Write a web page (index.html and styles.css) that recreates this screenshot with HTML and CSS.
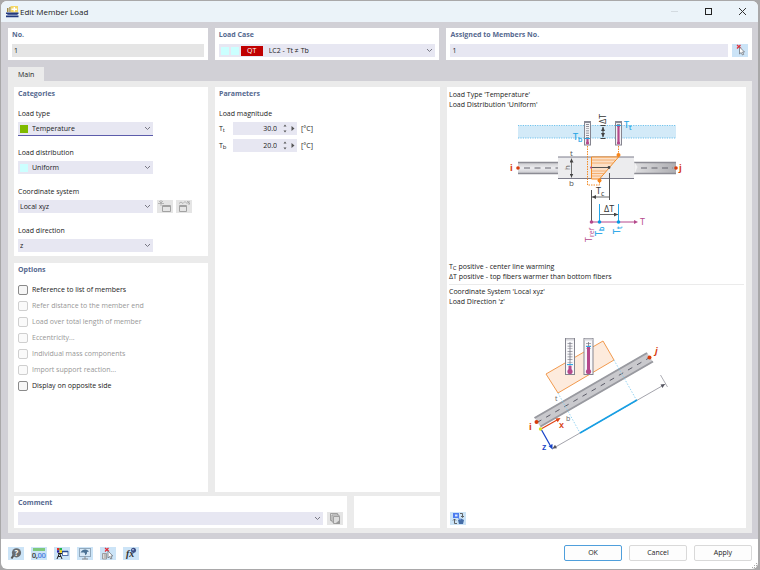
FILE: index.html
```html
<!DOCTYPE html>
<html lang="en">
<head>
<meta charset="utf-8">
<title>Edit Member Load</title>
<link rel="stylesheet" href="styles.css">
</head>
<body>
<svg width="0" height="0" class="defs" aria-hidden="true">
  <defs>
    <symbol id="chev" viewBox="0 0 7 5"><path d="M1 1l2.500 2.500L6 1" fill="none" stroke="#777783" stroke-width="1"/></symbol>
    <symbol id="cursor" viewBox="0 0 16 13"><path d="M5 1l4 3.500M8.500 1L5 4.500" stroke="#e0303c" stroke-width="1.300"/><path d="M7.500 3v7l1.700-1.500 1.300 2.500 1.200-.6-1.200-2.400h2z" fill="#fff" stroke="#70757c" stroke-width=".8"/></symbol>
  </defs>
</svg>
<div class="window">
  <header class="titlebar">
    <svg class="app-icon" width="13" height="12" viewBox="0 0 13 12"><rect x="4.500" y="0" width="7.500" height="6.500" fill="#f3d767"/><path d="M1 2h1.500v4H1zM3.300 1h1.200v5H3.300z" fill="#a08a45"/><path d="M5.500 3.300h5.500M8.300 1v4.500" stroke="#fff" stroke-width="1.400"/><path d="M0 6.500h12.500V8H0zM1.500 7.500h10v1.500h-10zM0 9.500h12.500v1.700H0z" fill="#22397f"/><path d="M1.500 9h10" stroke="#7889b8"/></svg>
    <h1>Edit Member Load</h1>
    <div class="window-buttons">
      <button aria-label="Minimize"><svg width="9" height="9" viewBox="0 0 9 9"><path d="M1 4.500h7" stroke="#d3dae0"/></svg></button>
      <button aria-label="Maximize"><svg width="9" height="9" viewBox="0 0 9 9"><rect x="1.500" y="1.500" width="6" height="6" fill="none" stroke="#222"/></svg></button>
      <button aria-label="Close"><svg width="9" height="9" viewBox="0 0 9 9"><path d="M1 1l7 7M8 1L1 8" stroke="#333"/></svg></button>
    </div>
  </header>

  <main class="content">
    <div class="top-row">
      <section class="card">
        <h2><label for="no">No.</label></h2>
        <input id="no" class="field readonly" value="1" readonly>
      </section>
      <section class="card">
        <h2><label for="case">Load Case</label></h2>
        <div class="combo case">
          <select id="case"><option>LC2 - Tt ≠ Tb</option></select>
          <span class="marks"><i class="swatch cyan"></i><i class="swatch cyan"></i><b class="tag">QT</b></span>
          <svg class="chev" width="7" height="5"><use href="#chev"/></svg>
        </div>
      </section>
      <section class="card">
        <h2><label for="members">Assigned to Members No.</label></h2>
        <div class="inline">
          <input id="members" class="field" value="1">
          <button class="tool" aria-label="Select members"><svg width="16" height="13"><use href="#cursor"/></svg></button>
        </div>
      </section>
    </div>

    <nav class="tabs"><button class="tab">Main</button></nav>

    <div class="panel">
      <div class="left">
        <div class="stack">
          <section class="card categories">
            <h2>Categories</h2>
            <div class="group">
              <label for="type">Load type</label>
              <div class="combo swatched active">
                <select id="type"><option>Temperature</option></select>
                <span class="marks"><i class="swatch green"></i></span>
                <svg class="chev" width="7" height="5"><use href="#chev"/></svg>
              </div>
            </div>
            <div class="group">
              <label for="dist">Load distribution</label>
              <div class="combo swatched">
                <select id="dist"><option>Uniform</option></select>
                <span class="marks"><i class="swatch cyan"></i></span>
                <svg class="chev" width="7" height="5"><use href="#chev"/></svg>
              </div>
            </div>
            <div class="group">
              <label for="system">Coordinate system</label>
              <div class="inline">
                <div class="combo">
                  <select id="system"><option>Local xyz</option></select>
                  <svg class="chev" width="7" height="5"><use href="#chev"/></svg>
                </div>
                <div class="pair">
                  <button class="tool off" aria-label="New coordinate system" disabled><svg width="16" height="13" viewBox="0 0 16 13" fill="none" stroke="#a2a2a2"><path d="M5.500 5.500h8v6h-8zM5.500 6.500h8"/><path d="M2 1l2 2M6 1L4 3M4 0v6M1 3.500h6" stroke-width=".7"/></svg></button>
                  <button class="tool off" aria-label="Edit coordinate system" disabled><svg width="16" height="13" viewBox="0 0 16 13" fill="none" stroke="#a2a2a2"><path d="M3.500 5.500h7v6h-7zM3.500 6.500h7"/><path d="M3 3.500l2-1.500 2 1.500 2-2 2 2 2-2M11 1l3 3M13 1v4" stroke-width=".8"/></svg></button>
                </div>
              </div>
            </div>
            <div class="group">
              <label for="dir">Load direction</label>
              <div class="combo">
                <select id="dir"><option>z</option></select>
                <svg class="chev" width="7" height="5"><use href="#chev"/></svg>
              </div>
            </div>
          </section>
          <section class="card options">
            <h2>Options</h2>
            <label class="check"><input type="checkbox">Reference to list of members</label>
            <label class="check"><input type="checkbox" disabled>Refer distance to the member end</label>
            <label class="check"><input type="checkbox" disabled>Load over total length of member</label>
            <label class="check"><input type="checkbox" disabled>Eccentricity...</label>
            <label class="check"><input type="checkbox" disabled>Individual mass components</label>
            <label class="check"><input type="checkbox" disabled>Import support reaction...</label>
            <label class="check"><input type="checkbox">Display on opposite side</label>
          </section>
        </div>

        <section class="card parameters">
          <h2>Parameters</h2>
          <p class="caption">Load magnitude</p>
          <div class="param">
            <label for="tt">T<span class="sub">t</span></label>
            <div class="spin"><input id="tt" value="30.0"><button aria-label="Change top value"><svg width="14" height="9" viewBox="0 0 14 9" fill="#555"><path d="M1.500 2.500L3 .5l1.500 2zM1.500 6.500L3 8.500l1.500-2zM9.500 2l3 2.500-3 2.500z"/></svg></button></div>
            <span>[°C]</span>
          </div>
          <div class="param">
            <label for="tb">T<span class="sub">b</span></label>
            <div class="spin"><input id="tb" value="20.0"><button aria-label="Change bottom value"><svg width="14" height="9" viewBox="0 0 14 9" fill="#555"><path d="M1.500 2.500L3 .5l1.500 2zM1.500 6.500L3 8.500l1.500-2zM9.500 2l3 2.500-3 2.500z"/></svg></button></div>
            <span>[°C]</span>
          </div>
        </section>

        <div class="bottom-row">
          <section class="card">
            <h2><label for="comment">Comment</label></h2>
            <div class="inline">
              <div class="combo">
                <select id="comment"><option></option></select>
                <svg class="chev" width="7" height="5"><use href="#chev"/></svg>
              </div>
              <button class="tool off" aria-label="Comment library" disabled><svg width="16" height="13" viewBox="0 0 16 13" fill="#ddd" stroke="#999" stroke-width=".9"><path d="M3.500 1.500h7v7h-7z"/><path d="M5 3h7v7H5z"/><path d="M6.500 4.500h6v7h-6z"/><path d="M9 11.500l3.500-3v3z" fill="#999"/></svg></button>
            </div>
          </section>
          <section class="card"></section>
        </div>
      </div>

      <section class="card preview">
        <p>Load Type 'Temperature'<br>Load Distribution 'Uniform'</p>
        <svg class="diagram" width="200" height="152" viewBox="497 110 200 152" role="img" aria-label="Temperature load on a member">
          <defs>
            <linearGradient id="pipe" x1="0" y1="0" x2="0" y2="1"><stop offset="0" stop-color="#c6c6ca"/><stop offset=".5" stop-color="#ededf0"/><stop offset="1" stop-color="#c6c6ca"/></linearGradient>
            <linearGradient id="pipe-end" x1="0" y1="0" x2="1" y2="0"><stop offset="0" stop-color="#dedee0"/><stop offset="1" stop-color="#aeaeb2"/></linearGradient>
            <marker id="dark" viewBox="0 0 6 6" refX="6" refY="3" markerWidth="4" markerHeight="4" markerUnits="userSpaceOnUse" orient="auto-start-reverse"><path d="M0 0l6 3-6 3z" fill="#444"/></marker>
          </defs>
          <rect x="518" y="125.500" width="158" height="12.500" fill="#d3eaf8"/>
          <path d="M518 125.500h158M518 138h158" stroke="#6fc2ed" stroke-dasharray="1.200 1.200"/>
          <g fill="#f3f3f5" stroke="#85858f">
            <rect x="584.500" y="122" width="6" height="23"/><rect x="615.500" y="122" width="6" height="23"/>
          </g>
          <path d="M584 122h7M615 122h7" stroke="#8b8b96" stroke-width="2"/>
          <path d="M587.500 124v14M618.500 124v4" stroke="#70707c" stroke-width="3" stroke-dasharray=".7 1.500"/>
          <path d="M587.500 138v6M618.500 126v18" stroke="#b5498c" stroke-width="2.200"/>
          <path d="M585 138.500h5M616 125.500h5" stroke="#2aa5e5"/>
          <circle cx="587.500" cy="143" r="1.600" fill="#b5498c"/><circle cx="618.500" cy="143" r="1.600" fill="#b5498c"/>
          <path d="M603 127v10" stroke="#444" marker-start="url(#dark)" marker-end="url(#dark)"/>
          <path d="M600.500 125.500h5M600.500 138.500h5" stroke="#444"/>
          <text transform="translate(606 124) rotate(-90)" font-size="9" fill="#333">ΔT</text>
          <g fill="#2aa5e5" font-size="9" stroke="#2aa5e5" stroke-width=".2"><text x="573" y="140">T<tspan font-size="7" dy="2">b</tspan></text><text x="624" y="128">T<tspan font-size="7" dy="2">t</tspan></text></g>

          <rect x="518" y="162" width="41" height="12" fill="url(#pipe)"/>
          <rect x="634" y="162" width="42" height="12" fill="url(#pipe-end)"/>
          <path d="M518 162.500h41M518 173.500h41M634 162.500h42M634 173.500h42" stroke="#8c8c94" stroke-width="1.500"/>
          <rect x="558" y="157" width="76" height="21.500" fill="#ececee"/>
          <path d="M558 157h76M558 178.500h76" stroke="#7d7d8b"/>
          <path d="M634.500 162l3 5-3 7z" fill="#f1f1f2"/>
          <path d="M524 168h34M641 168h32" stroke="#65656f" stroke-dasharray="6 4.500"/>
          <circle cx="518" cy="168" r="1.800" fill="#d83b0c"/><circle cx="676" cy="168" r="1.800" fill="#d83b0c"/>
          <g fill="#d83b0c" font-size="9" font-weight="700"><text x="510" y="171">i</text><text x="679" y="171">j</text></g>

          <path d="M591.500 157h27l-19 22h-8z" fill="#fbe0c8" stroke="#f28a24"/>
          <path d="M592 160h23M592 163h21M592 171h14M592 173.500h12M592 176h10" stroke="#f4a35a" stroke-width=".8"/>
          <path d="M587.500 146v39h12v-4M618.500 146v8" fill="none" stroke="#f28a24" stroke-dasharray="1.500 1"/>
          <circle cx="618.500" cy="155" r="2" fill="#f7861c"/><circle cx="599.500" cy="180.500" r="2" fill="#f7861c"/>
          <path d="M591 167.500h18" stroke="#555"/><circle cx="591" cy="167.500" r="1" fill="#b5498c"/><circle cx="609" cy="167.500" r="1.400" fill="#444"/>
          <path d="M571.500 158.500v19" stroke="#555" stroke-width=".8" marker-start="url(#dark)" marker-end="url(#dark)"/>
          <g fill="#555" font-size="8"><text x="570" y="156">t</text><text x="569" y="186">b</text><text transform="translate(570 170) rotate(-90)">h</text></g>

          <path d="M591.500 190v31M609.500 173v27" stroke="#555"/>
          <path d="M592 197h17M600 214.500h18" stroke="#444" stroke-width=".8" marker-start="url(#dark)" marker-end="url(#dark)"/>
          <g fill="#333" font-size="9"><text x="596" y="194">T<tspan font-size="7" dy="2">c</tspan></text><text x="604" y="212">ΔT</text></g>
          <path d="M599.500 204v18M618.500 204v18" stroke="#25a5e8"/>
          <path d="M591 222h44" stroke="#b5498c"/><path d="M634 220l4 2-4 2z" fill="#b5498c"/>
          <circle cx="591.500" cy="222" r="1.800" fill="#b5498c"/><circle cx="599.500" cy="222" r="1.800" fill="#0899e4"/><circle cx="618.500" cy="222" r="1.800" fill="#0899e4"/>
          <g font-size="9" fill="#b5498c"><text x="640" y="225">T</text><text transform="translate(592 242) rotate(-90)">T<tspan font-size="7" dy="2">ref</tspan></text></g>
          <g font-size="9" fill="#25a5e8" stroke="#25a5e8" stroke-width=".2"><text transform="translate(602 236) rotate(-90)">T<tspan font-size="7" dy="2">b</tspan></text><text transform="translate(620 234) rotate(-90)">T<tspan font-size="7" dy="2">t</tspan></text></g>
        </svg>
        <p>T<span class="sub">C</span> positive - center line warming<br>ΔT positive - top fibers warmer than bottom fibers</p>
        <hr>
        <p>Coordinate System 'Local xyz'<br>Load Direction 'z'</p>
        <svg class="diagram second" width="200" height="130" viewBox="497 330 200 130" role="img" aria-label="Load direction in the local axis system">
          <path d="M546 374l57-33 11 19-56 33z" fill="#fdebdd" stroke="#f29a4e"/>
          <g fill="#f8f8fa" stroke="#85858f"><rect x="565.500" y="338.500" width="9" height="36"/><rect x="584" y="338.500" width="9" height="36"/></g>
          <path d="M566 339.500h8M584.500 339.500h8" stroke="#d5d5da" stroke-width="2"/>
          <path d="M570 343v24M588.500 343v6" stroke="#8b8b95" stroke-width="5" stroke-dasharray=".7 2"/>
          <path d="M570 342v30M588.500 342v30" stroke="#777783" stroke-width=".8"/>
          <path d="M570 366v6M588.500 347v25" stroke="#b5498c" stroke-width="3"/>
          <circle cx="570" cy="371.500" r="2.600" fill="#b5498c"/><circle cx="588.500" cy="371.500" r="2.600" fill="#b5498c"/>
          <path d="M567 364.500h6M586 346.500h5" stroke="#30a8e8"/>
          <path d="M534.500 417.500L647 352.500l6 9.500-112.500 65z" fill="#c9c9cd"/>
          <path d="M534.500 418L647 353M540.500 426.500L653 361.500" stroke="#999aa0" stroke-width="2"/>
          <path d="M537 422.500l111-64" stroke="#5c5c68" stroke-dasharray="5 5.500"/>
          <path d="M558 393l22 40M614 360l23 41" stroke="#7cc9ef" stroke-width=".8" stroke-dasharray="1.500 1.500"/>
          <path d="M552 449l113.500-65" stroke="#8b8b95" stroke-width=".8"/>
          <path d="M660.500 375l7 12" stroke="#8b8b95" stroke-width=".7"/>
          <path d="M665 384l-4.500.5 2 3.500zM552.500 448.500l4.500-.3-2-3.500z" fill="#555560"/>
          <path d="M580 433l57-33" stroke="#169fe5" stroke-width="1.500"/>
          <path d="M541 429l16-9" stroke="#df4212" stroke-width="1.200"/><path d="M560.500 418l-5 .5 2.200 3.800z" fill="#df4212"/>
          <path d="M541 429l9 16" stroke="#1743c6" stroke-width="1.200"/><path d="M552.500 449.500l-4-3.500 4-2z" fill="#1743c6"/>
          <circle cx="540.500" cy="429" r="1.700" fill="#d9e021"/>
          <circle cx="536.500" cy="422" r="2" fill="#d83b0c"/><circle cx="649.500" cy="357.500" r="2" fill="#d83b0c"/>
          <g fill="#d83b0c" font-size="9" font-weight="700"><text x="529" y="430">i</text><text x="655" y="354" font-style="italic">j</text><text x="559" y="428" font-weight="600">x</text></g>
          <text x="542" y="450" font-size="9" font-weight="600" fill="#1743c6">z</text>
          <g fill="#666" font-size="7"><text x="555" y="401">t</text><text x="566" y="421">b</text></g>
        </svg>
        <button class="tool swap" aria-label="Switch preview"><svg width="16" height="13" viewBox="0 0 16 13"><path d="M3 1h6v5H3z" fill="#4b7cf0"/><path d="M5 2.500h2.500v2H5z" fill="#dbe7ff"/><path d="M8 8l3-1.500 3 1.500-1 4H9z" fill="#466ea8"/><path d="M8 6l3 2" stroke="#6c98ea"/><path d="M10 1.500h2.500V5M11 4l1.500 1.500L14 4M7 11.500H4.500V7M3 8.500L4.500 7 6 8.500" fill="none" stroke="#555" stroke-width=".9"/></svg></button>
      </section>
    </div>
  </main>

  <footer class="footer">
    <div class="tools">
      <button class="tool" aria-label="Help"><svg width="16" height="13" viewBox="0 0 16 13"><path d="M3.500 11.500L6 7.500" stroke="#555" stroke-width="2"/><circle cx="8.500" cy="5.800" r="4.600" fill="#686c70"/><text x="6.500" y="8.500" font-size="8" font-weight="700" fill="#fff">?</text></svg></button>
      <button class="tool" aria-label="Units"><svg width="16" height="13" viewBox="0 0 16 13"><rect x="2" y="1" width="12" height="3" fill="#7ec97d"/><text x="1" y="11" font-size="7" fill="#222" stroke="#222" stroke-width=".2">0,<tspan fill="#3b72dd" stroke="#3b72dd">00</tspan></text></svg></button>
      <button class="tool" aria-label="Colors"><svg width="16" height="13" viewBox="0 0 16 13"><rect x="3" y="1" width="2.500" height="2.300" fill="#e72e26"/><rect x="5.500" y="1" width="2.500" height="2.300" fill="#23b34a"/><rect x="3" y="3.300" width="2.500" height="2.300" fill="#22a"/><rect x="5.500" y="3.300" width="2.500" height="2.300" fill="#f3d000"/><path d="M3 12l2.500-6L8 12M4 6.500h4M4 9.500h3" stroke="#222" fill="none"/><rect x="8.500" y="4.500" width="5.500" height="4" fill="#fff" stroke="#5573ad"/><path d="M8 4.500h6" stroke="#274a91" stroke-width="1.500"/></svg></button>
      <button class="tool" aria-label="Display"><svg width="16" height="13" viewBox="0 0 16 13"><rect x="2.500" y="1.500" width="11" height="8" fill="#d8e9f6" stroke="#91a9bd"/><path d="M3.500 5.500C5.500 2 9 1.500 12 4.500L10 5c.3 1.500-.5 2.500-2 3.300.3-1.500 0-2.300-1-2.800z" fill="#4b7294"/><path d="M8 9.500V12M5 12h6" stroke="#888"/></svg></button>
      <button class="tool" aria-label="Clear selection"><svg width="16" height="13" viewBox="0 0 16 13"><path d="M5 1l4 3.500M8.500 1L5 4.500" stroke="#e12e38" stroke-width="1.200"/><path d="M2.500 6.500h4V12h-4zM4 8h2M4 10h2" fill="#ddd" stroke="#8d8d8d" stroke-width=".8"/><path d="M8 4v7l1.500-1.500 1.300 2.500 1.200-.6-1.200-2.400h2z" fill="#fff" stroke="#70757c" stroke-width=".8"/></svg></button>
      <button class="tool" aria-label="Formula"><svg width="16" height="13" viewBox="0 0 16 13"><text x="3" y="10" class="fx">fx</text><circle cx="10.500" cy="3.300" r="2.500" fill="#3b4f86"/><circle cx="10" cy="2.800" r=".8" fill="#dfe8ff"/></svg></button>
    </div>
    <div class="actions">
      <button class="push primary">OK</button>
      <button class="push">Cancel</button>
      <button class="push">Apply</button>
    </div>
    <svg class="grip" width="6" height="6" viewBox="0 0 6 6" fill="#aaa"><path d="M4 0h1v1H4zM4 2h1v1H4zM2 2h1v1H2zM4 4h1v1H4zM2 4h1v1H2zM0 4h1v1H0z"/></svg>
  </footer>
</div>
</body>
</html>
```
FILE: styles.css
```css
* { box-sizing: border-box; }

body {
  margin: 0;
  background: #a9a8a9;
  color: #222;
  font: 7px/10px "Open Sans", "Noto Sans", sans-serif;
}

h1, h2, p { margin: 0; }
svg { display: block; }
.defs { position: absolute; }

button, input, select {
  margin: 0;
  padding: 0;
  border: 0;
  border-radius: 0;
  background: none;
  color: inherit;
  font: inherit;
}

.window {
  display: flex;
  flex-direction: column;
  min-height: calc(100vh - 2px);
  margin: 1px 2px 1px 1px;
  border-radius: 6px;
  overflow: hidden;
  background: #fff;
}

/* Title bar */
.titlebar {
  display: flex;
  align-items: center;
  gap: 1px;
  height: 21px;
  padding: 0 11px 0 5px;
  background: #ebf3f9;
}
.titlebar h1 { flex: 1; font-size: 8px; font-weight: 400; }
.window-buttons { display: flex; gap: 25px; }

/* Dialog body */
.content {
  display: flex;
  flex: 1;
  flex-direction: column;
  padding: 6px 6px 6px 7px;
  background: #d1d0d6;
}
.top-row {
  display: grid;
  grid-template-columns: 200fr 225fr 306fr;
  gap: 7px;
}
.card { min-width: 0; padding: 2px 4px 3px; background: #fff; }
.card h2 {
  margin-bottom: 4px;
  color: #56698f;
  font-size: 7px;
  font-weight: 700;
}

.field {
  display: block;
  flex: 1;
  width: 100%;
  min-width: 0;
  height: 13px;
  padding: 0 2px;
  background: #e7e7f2;
}
.readonly { background: #e5e5e5; }
.inline { display: flex; gap: 4px; }

.tool {
  flex: none;
  width: 16px;
  height: 13px;
  background: #cce4f7;
}
.tool.off { background: #e5e5e5; }

/* Drop-downs */
.combo { position: relative; flex: 1; height: 13px; background: #e7e7f2; }
.combo select {
  display: block;
  width: 100%;
  height: 100%;
  padding: 0 16px 0 2px;
  appearance: none;
}
.combo .chev { position: absolute; top: 4px; right: 2px; }
.combo .marks {
  position: absolute;
  top: 0;
  left: 2px;
  display: flex;
  align-items: center;
  gap: 2px;
  height: 13px;
  pointer-events: none;
}
.swatched select { padding-left: 14px; }
.case select { padding-left: 50px; }
.active { box-shadow: 0 1px #5c5cab; }
.swatch { width: 8px; height: 8px; }
.cyan { background: #ccffff; }
.green { background: #7fba00; }
.tag {
  width: 22px;
  height: 10px;
  background: #c00000;
  color: #fff;
  font-weight: 400;
  text-align: center;
}

/* Tab strip and panel */
.tabs { display: flex; margin-top: 7px; }
.tab { height: 14px; padding: 2px 10px 0; background: #ebebeb; font-size: 7px; }
.panel {
  display: grid;
  flex: 1;
  grid-template-columns: 426fr 299fr;
  gap: 7px;
  padding: 6px 6px 5px;
  background: #ebebeb;
}
.left {
  display: grid;
  grid-template-columns: 194fr 225fr;
  grid-template-rows: 1fr auto;
  gap: 4px 7px;
}
.stack { display: flex; flex-direction: column; gap: 7px; }
.stack h2, .parameters h2 { margin-bottom: 7px; }
.bottom-row {
  display: grid;
  grid-column: 1 / -1;
  grid-template-columns: 333fr 86fr;
  gap: 7px;
}

.categories { padding-bottom: 4px; }
.group + .group { margin-top: 10px; }
.group label { display: block; line-height: 16px; }
.group > .combo { margin-right: 51px; }
.pair { display: flex; gap: 3px; margin-right: 12px; }

.options { flex: 1; }
.check { display: flex; align-items: center; gap: 4px; height: 16px; }
.check input {
  width: 10px;
  height: 10px;
  appearance: none;
  border: 1px solid #8a8a8a;
  border-radius: 2px;
  background: #f6f6f6;
}
.check input:disabled { border-color: #cfcfcf; background: #fafafa; }
.check:has(:disabled) { color: #979797; }

.caption { line-height: 16px; }
.param {
  display: grid;
  grid-template-columns: 10px 64px auto;
  align-items: center;
  gap: 4px;
  margin-bottom: 4px;
}
.sub { position: relative; top: 1px; font-size: 6px; }
.spin { display: flex; align-items: center; height: 13px; background: #e7e7f2; }
.spin input { flex: 1; min-width: 0; text-align: right; }
.spin button { margin: 0 1px 0 5px; }

/* Preview */
.preview { display: flex; flex-direction: column; padding: 3px 2px; }
.preview hr { width: 100%; height: 1px; margin: 2px 0; border: 0; background: #ebebeb; }
.diagram { align-self: center; }
.second { margin-top: 23px; }
.swap { margin: auto 0 0 1px; }

/* Footer */
.footer {
  position: relative;
  display: flex;
  align-items: center;
  justify-content: space-between;
  height: 30px;
  padding: 0 6px 2px 7px;
}
.tools, .actions { display: flex; gap: 7px; }
.push {
  width: 58px;
  height: 16px;
  border: 1px solid #d9d9d9;
  border-radius: 2px;
  background: #fdfdfd;
}
.primary { border-color: #4f9fdc; }
.grip { position: absolute; right: 0; bottom: 0; }
.fx { font: italic 700 10px "Liberation Serif", serif; fill: #333; }
```
